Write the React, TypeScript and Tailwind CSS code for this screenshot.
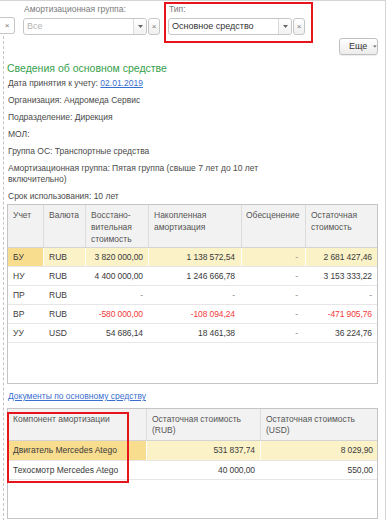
import React from 'react'

const FONT = "font-['Liberation_Sans',Arial,sans-serif]"

interface Row {
  acc: string
  cur: string
  cost: string
  amort: string
  loss: string
  rest: string
  neg?: boolean
}

const ROWS: Row[] = [
  { acc: 'БУ', cur: 'RUB', cost: '3 820 000,00', amort: '1 138 572,54', loss: '-', rest: '2 681 427,46' },
  { acc: 'НУ', cur: 'RUB', cost: '4 400 000,00', amort: '1 246 666,78', loss: '-', rest: '3 153 333,22' },
  { acc: 'ПР', cur: 'RUB', cost: '-', amort: '-', loss: '-', rest: '-' },
  { acc: 'ВР', cur: 'RUB', cost: '-580 000,00', amort: '-108 094,24', loss: '-', rest: '-471 905,76', neg: true },
  { acc: 'УУ', cur: 'USD', cost: '54 686,14', amort: '18 461,38', loss: '-', rest: '36 224,76' },
]

const COMPONENTS = [
  { name: 'Двигатель Mercedes Atego', rub: '531 837,74', usd: '8 029,90' },
  { name: 'Техосмотр Mercedes Atego', rub: '40 000,00', usd: '550,00' },
]

function XBtn({ className = '' }: { className?: string }) {
  return (
    <div className={`flex items-center justify-center h-[17px] border border-[#c6c6c6] rounded-[3px] bg-linear-to-b from-white to-[#efefef] text-[8px] text-[#777] leading-none ${className}`}>
      ×
    </div>
  )
}

function Caret() {
  return (
    <svg width="5" height="3" viewBox="0 0 5 3">
      <path d="M0 0h5L2.5 3z" fill="#666" />
    </svg>
  )
}

function Field({ label, value, placeholder, width }: { label: string; value: string; placeholder?: boolean; width: string }) {
  return (
    <div className="flex flex-col">
      <div className="h-[17px] pt-[3px] pl-[1px] text-[8.5px] leading-[11px] text-[#7a7a7a]">{label}</div>
      <div className="flex">
        <div className={`${width} h-[17px] border border-[#c6c6c6] rounded-[3px] flex bg-white`}>
          <div className={`flex-1 pl-[3px] text-[9px] leading-[15px] ${placeholder ? 'text-[#b4b4b4]' : 'text-[#333]'}`}>{value}</div>
          <div className="w-[13px] border-l border-[#dadada] flex items-center justify-center bg-linear-to-b from-white to-[#f2f2f2] rounded-r-[3px]">
            <Caret />
          </div>
        </div>
        <XBtn className="ml-[1px] w-[12px]" />
      </div>
    </div>
  )
}

function Info({ children }: { children: React.ReactNode }) {
  return <div className="pl-[1px] py-[3px] text-[8.5px] leading-[11px] text-[#4a4a4a]">{children}</div>
}

export default function App() {
  return (
    <div className={`w-[388px] h-[520px] overflow-hidden bg-white relative ${FONT}`}>
      <div className="w-[386px] h-full border-r border-t border-[#d4d4d4]">
        {/* Фильтры */}
        <div className="h-[35px] flex">
          <div className="mt-[16px] w-[15px] h-[17px] border border-l-0 border-[#c6c6c6] rounded-r-[3px] flex items-center justify-center text-[8px] text-[#777]">
            ×
          </div>
          <div className="ml-[8px]">
            <Field label="Амортизационная группа:" value="Все" placeholder width="w-[124px]" />
          </div>
          <div className="ml-[8px]">
            <Field label="Тип:" value="Основное средство" width="w-[124px]" />
          </div>
        </div>

        <div className="ml-[3px] border-l border-dashed border-[#c4c4c4] pl-[3px] pr-[7px] h-[485px]">
          <div className="flex justify-end pt-[2px]">
            <div className="w-[39px] h-[17px] border border-[#c0c0c0] rounded-[3px] bg-linear-to-b from-white to-[#ececec] flex items-center pl-[9px] gap-[6px] text-[9px] text-[#333] shadow-[0_1px_1px_rgba(0,0,0,0.08)]">
              <span>Еще</span>
              <Caret />
            </div>
          </div>

          <div className="mt-[6px] h-[14px] text-[10.5px] leading-[14px] text-[#36a14c]">Сведения об основном средстве</div>
          <Info>
            Дата принятия к учету: <span className="text-[#3b6fcf] underline">02.01.2019</span>
          </Info>
          <Info>Организация: Андромеда Сервис</Info>
          <Info>Подразделение: Дирекция</Info>
          <Info>МОЛ:</Info>
          <Info>Группа ОС: Транспортные средства</Info>
          <Info>
            Амортизационная группа: Пятая группа (свыше 7 лет до 10 лет
            <br />
            включительно)
          </Info>
          <Info>Срок использования: 10 лет</Info>

          {/* Таблица стоимости */}
          <div className="mt-[-1px] h-[180px] border border-[#c4c4c4] text-[8.5px] text-[#3a3a3a]">
            <div className="grid grid-cols-[36px_42px_63px_93px_64px_71px] h-[43px] bg-[#f2f2f2] border-b border-[#d4d4d4] text-[#555] leading-[12px]">
              <div className="px-[5px] pt-[4px] border-r border-[#dcdcdc]">Учет</div>
              <div className="px-[5px] pt-[4px] border-r border-[#dcdcdc]">Валюта</div>
              <div className="px-[5px] pt-[4px] border-r border-[#dcdcdc]">Восстано-<br />вительная<br />стоимость</div>
              <div className="px-[5px] pt-[4px] border-r border-[#dcdcdc]">Накопленная<br />амортизация</div>
              <div className="px-[4px] pt-[4px] border-r border-[#dcdcdc] whitespace-nowrap">Обесценение</div>
              <div className="px-[5px] pt-[4px]">Остаточная<br />стоимость</div>
            </div>
            {ROWS.map((r, i) => {
              const sel = i === 0
              const rowBg = sel ? 'bg-[#fcf2c8]' : ''
              const num = r.neg ? 'text-[#f23a3a]' : ''
              return (
                <div key={r.acc} className={`grid grid-cols-[36px_42px_63px_93px_64px_71px] h-[19px] border-b border-[#e6e6e6] leading-[18px] whitespace-nowrap ${rowBg}`}>
                  <div className={`px-[5px] border-r border-white ${sel ? 'bg-[#f9dd8e]' : ''}`}>{r.acc}</div>
                  <div className="px-[5px] border-r border-white">{r.cur}</div>
                  <div className={`pr-[5px] text-right tracking-[-0.1px] border-r border-white ${r.cost === '-' ? 'text-[#888]' : num}`}>{r.cost}</div>
                  <div className={`pr-[6px] text-right tracking-[-0.1px] border-r border-white ${r.amort === '-' ? 'text-[#888]' : num}`}>{r.amort}</div>
                  <div className="pr-[7px] text-right border-r border-white text-[#888]">{r.loss}</div>
                  <div className={`pr-[5px] text-right tracking-[-0.1px] ${r.rest === '-' ? 'text-[#888]' : num}`}>{r.rest}</div>
                </div>
              )
            })}
          </div>

          <div className="mt-[6px] h-[13px] pl-[1px] text-[8.5px] leading-[13px] text-[#3b6fcf] underline">Документы по основному средству</div>

          {/* Компоненты амортизации */}
          <div className="mt-[5px] h-[111px] border border-[#c4c4c4] text-[8.5px] text-[#3a3a3a]">
            <div className="grid grid-cols-[139px_114px_116px] h-[32px] bg-[#f2f2f2] border-b border-[#d4d4d4] text-[#555] leading-[11px]">
              <div className="px-[5px] pt-[5px] border-r border-[#dcdcdc]">Компонент амортизации</div>
              <div className="px-[5px] pt-[5px] border-r border-[#dcdcdc]">Остаточная стоимость<br />(RUB)</div>
              <div className="px-[5px] pt-[5px]">Остаточная стоимость<br />(USD)</div>
            </div>
            {COMPONENTS.map((c, i) => {
              const sel = i === 0
              return (
                <div key={c.name} className={`grid grid-cols-[139px_114px_116px] ${sel ? 'h-[20px] bg-[#fcf2c8]' : 'h-[19px]'} border-b border-[#e6e6e6] leading-[18px] whitespace-nowrap`}>
                  <div className={`px-[5px] border-r border-white ${sel ? 'bg-[#f9dd8e]' : ''}`}>{c.name}</div>
                  <div className="pr-[5px] text-right tracking-[-0.1px] border-r border-white">{c.rub}</div>
                  <div className="pr-[4px] text-right tracking-[-0.1px]">{c.usd}</div>
                </div>
              )
            })}
          </div>
        </div>
      </div>

      {/* Пометки */}
      <div className="absolute left-[164px] top-[2px] w-[149px] h-[41px] border-2 border-[#e8141b]" />
      <div className="absolute left-[7px] top-[412px] w-[122px] h-[71px] border-2 border-[#e8141b]" />
    </div>
  )
}
